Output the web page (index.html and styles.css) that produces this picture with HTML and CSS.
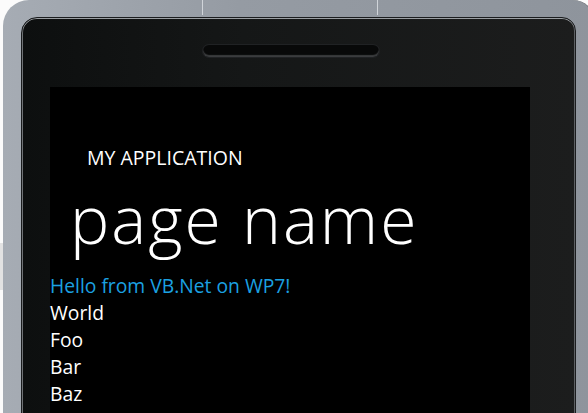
FILE: index.html
```html
<!DOCTYPE html>
<html lang="en">
<head>
    <meta charset="UTF-8">
    <title>WP7 Emulator</title>
    <link rel="stylesheet" href="styles.css">
</head>
<body>
    <div class="phone">
        <div class="bezel">
            <div class="speaker"></div>
            <div class="screen">
                <div class="title-panel">
                    <div class="app-title">MY APPLICATION</div>
                    <div class="page-title">page name</div>
                </div>
                <div class="content">
                    <div class="hello">Hello from VB.Net on WP7!</div>
                    <div class="item">World</div>
                    <div class="item">Foo</div>
                    <div class="item">Bar</div>
                    <div class="item">Baz</div>
                    <div class="item">and this line is shown in the list below the others too</div>
                </div>
            </div>
        </div>
    </div>
</body>
</html>
```

FILE: styles.css
```css
html, body {
    margin: 0;
    padding: 0;
    height: 413px;
    overflow: hidden;
}

body {
    background: linear-gradient(to bottom, #fbfbfb 0, #fbfbfb 243px, #e2e2e2 243px, #e2e2e2 290px, #fbfbfb 290px);
    font-family: "Open Sans", "Noto Sans", sans-serif;
}

.phone {
    margin-left: 3px;
    width: 555px;
    height: 640px;
    padding: 17px 18px 0 18px;
    border-right: 1px solid #3a3d42;
    border-radius: 26px 22px 0 0;
    background:
        linear-gradient(#d0d4d9, #d0d4d9) 199px 0 / 1px 15px no-repeat,
        linear-gradient(#d0d4d9, #d0d4d9) 374px 0 / 1px 15px no-repeat,
        linear-gradient(to right, #a6acb4, #959ba3 40%, #8e949c);
}

.bezel {
    height: 620px;
    border: 1px solid #1b1d1f;
    border-radius: 16px 14px 0 0;
    box-shadow: inset 0 1px 0 #9a9ea2, inset 1px 0 0 #6f7275, inset -1px 0 0 #5d6063;
    background: linear-gradient(to right, #0d0f0f, #151717 40%, #1c1d1d);
    overflow: hidden;
}

.speaker {
    width: 176px;
    height: 12px;
    margin: 27px 0 0 181px;
    border-radius: 6px;
    background: #080909;
    box-shadow: inset 0 -2px 1px #3a3c3e, 0 0 0 1px #202224;
}

.screen {
    width: 480px;
    height: 560px;
    margin: 30px 0 0 28px;
    background: #000000;
    color: #ffffff;
}

.title-panel {
    padding-top: 59px;
}

.app-title {
    padding-left: 37px;
    font-size: 19.5px;
    line-height: 24px;
}

.page-title {
    margin-top: 12px;
    padding-left: 20px;
    font-size: 66px;
    font-weight: 300;
    line-height: 72px;
    letter-spacing: 2px;
}

.content {
    padding-top: 18px;
}

.hello {
    color: #1ba1e2;
    font-size: 19.3px;
    line-height: 27px;
}

.item {
    font-size: 19.3px;
    line-height: 27px;
    white-space: nowrap;
}
```
